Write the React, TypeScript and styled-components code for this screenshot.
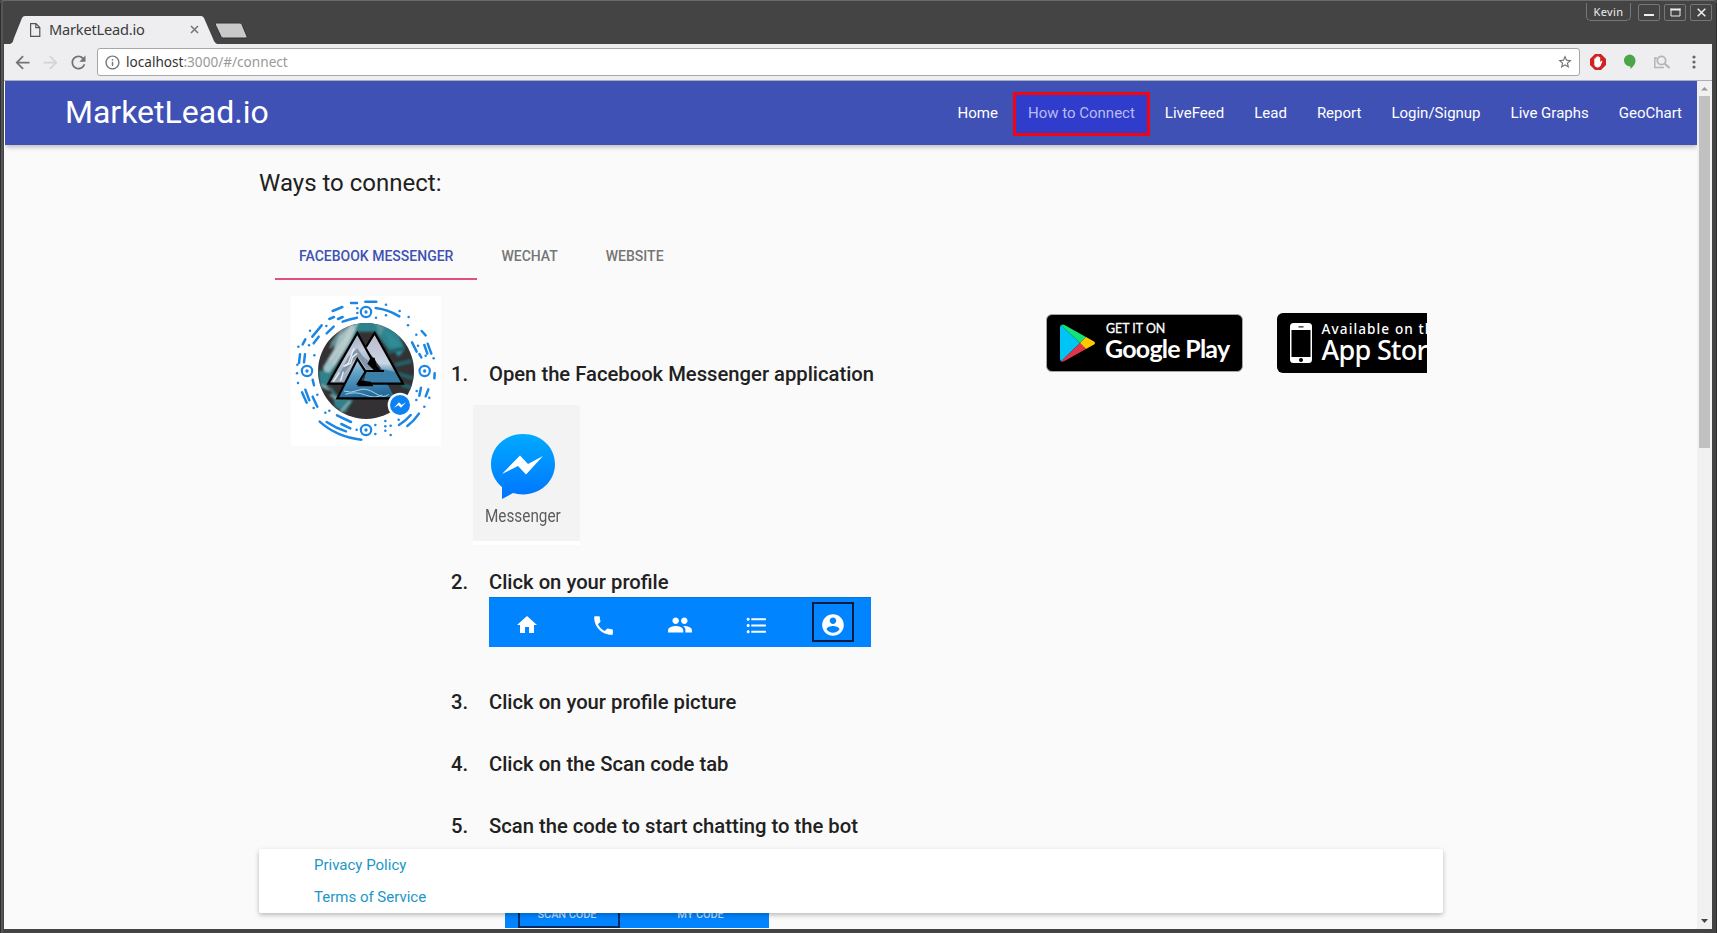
import React from "react";
import styled, { createGlobalStyle } from "styled-components";

const Global = createGlobalStyle`
  * { box-sizing: border-box; }
  body { margin: 0; background: #444; font-family: Roboto, sans-serif; overflow: hidden; }
`;

/* ---------- browser window ---------- */
const Window = styled.div`
  width: 1717px;
  height: 933px;
  display: flex;
  flex-direction: column;
  padding: 0 5px 4px 4px;
  background: #444;
  border-radius: 4px 4px 0 0;
  box-shadow: inset 0 2px 0 -1px #6a6a6a, inset 1px 0 0 #2e2e2e, inset 3px 0 0 #555, inset -1px 0 0 #2e2e2e;
`;
const TitleBar = styled.div`
  height: 44px;
  flex: none;
  display: flex;
  justify-content: space-between;
`;
const TabStrip = styled.div`
  position: relative;
  width: 260px;
  height: 44px;
  padding: 18px 0 0 25px;
  display: flex;
  align-items: flex-start;
`;
const TabShape = styled.svg`
  position: absolute;
  left: 0;
  top: 0;
`;
const TabContent = styled.div`
  position: relative;
  display: flex;
  align-items: center;
  height: 23px;
  width: 170px;
  font: 14.6px/22px "Noto Sans", sans-serif;
  letter-spacing: -0.2px;
  color: #3b3b3b;
  svg { flex: none; }
  span { flex: 1; margin: -1px 0 0 8px; }
`;
const WindowButtons = styled.div`
  display: flex;
  align-items: flex-start;
  padding-top: 3px;
`;
const UserButton = styled.div`
  width: 45px;
  height: 18px;
  margin-right: 3px;
  border: 1px solid #777;
  border-top: none;
  border-radius: 0 0 5px 5px;
  text-align: center;
  font: 11px/18px "Noto Sans", sans-serif;
  letter-spacing: 0.35px;
  color: #eee;
`;
const WinButton = styled.div`
  width: 22px;
  height: 17px;
  margin: 1px 0 0 4px;
  border: 1px solid #777;
  border-radius: 2px;
  display: flex;
  align-items: center;
  justify-content: center;
`;
const Toolbar = styled.div`
  height: 37px;
  flex: none;
  background: #eeeef0;
  border-bottom: 1px solid #a9aebf;
  display: flex;
  align-items: center;
  padding: 0 9px 0 8px;
`;
const NavIcons = styled.div`
  display: flex;
  width: 85px;
  gap: 7px;
`;
const Address = styled.div`
  flex: none;
  width: 1483px;
  height: 28px;
  border: 1px solid #a6a6a6;
  border-radius: 3px;
  background: #fff;
  display: flex;
  align-items: center;
  padding: 0 6px;
  font: 13.6px/26px "Noto Sans", sans-serif;
  color: #999;
  b { font-weight: 400; color: #333; }
  span { flex: 1; margin-left: 5px; }
`;
const Extensions = styled.div`
  flex: 1;
  display: flex;
  align-items: center;
  padding-left: 10px;
`;
const ExtIcon = styled.svg<{ $gap?: number }>`
  flex: none;
  margin-right: ${(p) => p.$gap ?? 16}px;
`;

/* ---------- page ---------- */
const Viewport = styled.div`
  flex: 1;
  min-height: 0;
  display: flex;
  padding-left: 1px;
  background: #fafafa;
`;
const Page = styled.div`
  position: relative;
  width: 1692px;
  overflow: hidden;
  background: #fafafa;
  color: #212121;
`;
const ScrollTrack = styled.div`
  flex: 1;
  background: #f1f1f1;
  display: flex;
  flex-direction: column;
  align-items: center;
  justify-content: space-between;
`;
const ScrollTop = styled.div`
  display: flex;
  flex-direction: column;
  align-items: center;
`;
const Arrow = styled.svg`
  display: block;
`;
const Thumb = styled.div`
  width: 11px;
  height: 352px;
  background: #c1c1c1;
`;
const Nav = styled.nav`
  position: relative;
  height: 64px;
  background: #3f51b5;
  box-shadow: 0 2px 5px rgba(0, 0, 0, 0.26);
  display: flex;
  justify-content: space-between;
  color: #fff;
`;
const Brand = styled.div`
  margin-left: 60px;
  font-size: 32px;
  line-height: 63px;
`;
const Links = styled.div`
  display: flex;
  align-items: center;
`;
const Link = styled.a<{ $active?: boolean }>`
  display: block;
  padding: 0 ${(p) => (p.$active ? 12 : 15)}px;
  height: ${(p) => (p.$active ? 44 : 40)}px;
  line-height: ${(p) => (p.$active ? 37 : 40)}px;
  margin-top: ${(p) => (p.$active ? 2 : 0)}px;
  font-size: 15px;
  color: ${(p) => (p.$active ? "#b9bdf0" : "#fff")};
  background: ${(p) => (p.$active ? "#303ccb" : "transparent")};
  border: ${(p) => (p.$active ? "3px solid #f20510" : "none")};
`;
const Container = styled.main`
  width: 1184px;
  margin: 0 auto;
`;
const Heading = styled.h1`
  margin: 0;
  padding-top: 23px;
  font-size: 24px;
  line-height: 30px;
  font-weight: 400;
`;
const Tabs = styled.div`
  display: flex;
  height: 48px;
  margin: 34px 0 0 16px;
`;
const Tab = styled.div<{ $active?: boolean }>`
  padding: 0 24px;
  line-height: 48px;
  height: 48px;
  font-size: 14px;
  font-weight: 500;
  color: ${(p) => (p.$active ? "#3f51b5" : "#757575")};
  box-shadow: inset 0 -2px 0 ${(p) => (p.$active ? "#e0507f" : "transparent")};
`;
const Columns = styled.div`
  display: flex;
  padding: 16px 0 0 32px;
`;
const CodeImage = styled.svg`
  flex: none;
  display: block;
  background: #fff;
`;
const Steps = styled.ol`
  list-style: none;
  margin: 66px 0 0 10px;
  padding: 0;
  width: 594px;
`;
const Step = styled.li<{ $h: number }>`
  height: ${(p) => p.$h}px;
  display: flex;
  font-size: 20.23px;
  line-height: 24px;
  font-weight: 500;
`;
const Num = styled.span`
  width: 38px;
  flex: none;
`;
const AppTile = styled.div`
  width: 107px;
  height: 140px;
  margin: 19px 0 0 -16px;
  border-bottom: 4px solid #fff;
  background: #f3f3f3;
  padding-top: 28px;
  font: 400 17px/20px Roboto, sans-serif;
  color: #5c5c5c;
  svg { display: block; margin: 0 0 7px 16px; }
`;
const TileLabel = styled.div`
  margin-left: 12px;
  transform: scale(0.9, 1.08);
  transform-origin: 0 60%;
  white-space: nowrap;
`;
const ProfileBar = styled.div`
  width: 382px;
  height: 50px;
  margin-top: 3px;
  background: #0084ff;
  border-top: 1px solid #0877d8;
  display: grid;
  grid-template-columns: repeat(5, 76.4px);
`;
const BarCell = styled.div`
  display: flex;
  align-items: center;
  justify-content: center;
  padding-top: 5px;
`;
const Selected = styled.div`
  width: 42px;
  height: 40px;
  margin-top: -6px;
  padding-top: 6px;
  border: 2px solid #0a1a3c;
  display: flex;
  align-items: center;
  justify-content: center;
`;
const ScanBar = styled.div`
  width: 264px;
  height: 48px;
  margin: 42px 0 0 16px;
  background: #0084ff;
  display: flex;
  padding: 0 0 0 13px;
  font: 500 11px/46px Roboto, sans-serif;
  color: #b9dcff;
`;
const ScanTab = styled.div<{ $on?: boolean }>`
  width: ${(p) => (p.$on ? 102 : 148)}px;
  padding: 0 ${(p) => (p.$on ? 4 : 0)}px 0 ${(p) => (p.$on ? 0 : 13)}px;
  border: ${(p) => (p.$on ? "2px solid #0a2a5c" : "2px solid transparent")};
  line-height: 66px;
  letter-spacing: -0.1px;
  text-align: center;
`;
const Badges = styled.div`
  display: flex;
  margin-top: 18px;
  gap: 34px;
`;
const PlayBadge = styled.div`
  width: 197px;
  height: 58px;
  margin-left: 1px;
  background: #000;
  border: 1px solid #a6a6a6;
  border-radius: 6px;
  display: flex;
  padding: 9px 0 0 13px;
  color: #fff;
  svg { flex: none; }
`;
const BadgeText = styled.div<{ $ml: number }>`
  margin-left: ${(p) => p.$ml}px;
  white-space: nowrap;
`;
const PlaySmall = styled.div`
  margin: -1px 0 0 1px;
  font: 400 12.4px/12px Lato, sans-serif;
  -webkit-text-stroke: 0.3px #fff;
`;
const PlayBig = styled.div`
  font: 700 25px/26px Lato, sans-serif;
  letter-spacing: -0.75px;
`;
const StoreBadge = styled.div`
  width: 150px;
  height: 60px;
  margin-top: -1px;
  background: #000;
  border-radius: 6px 0 0 6px;
  display: flex;
  padding: 10px 0 0 13px;
  overflow: hidden;
  color: #fff;
  svg { flex: none; }
`;
const StoreSmall = styled.div`
  font: 500 13.6px/12px "Noto Sans", sans-serif;
  letter-spacing: 1.1px;
`;
const StoreBig = styled.div`
  font: 500 27px/29px "Noto Sans", sans-serif;
  letter-spacing: -0.7px;
`;
const Footer = styled.footer`
  position: absolute;
  left: 254px;
  bottom: 16px;
  width: 1184px;
  height: 64px;
  padding-left: 55px;
  background: #fff;
  border-radius: 2px;
  box-shadow: 0 2px 5px rgba(0, 0, 0, 0.26);
  font-size: 15px;
  line-height: 32px;
`;
const FooterLink = styled.a`
  display: block;
  color: #1a96c8;
`;

const MATERIAL = {
  home: "M10 20v-6h4v6h5v-8h3L12 3 2 12h3v8z",
  phone:
    "M6.62 10.79c1.44 2.83 3.76 5.14 6.59 6.59l2.2-2.2c.27-.27.67-.36 1.02-.24 1.12.37 2.33.57 3.57.57.55 0 1 .45 1 1V20c0 .55-.45 1-1 1-9.39 0-17-7.61-17-17 0-.55.45-1 1-1h3.5c.55 0 1 .45 1 1 0 1.25.2 2.45.57 3.57.11.35.03.74-.25 1.02l-2.2 2.2z",
  people:
    "M16 11c1.66 0 2.99-1.34 2.99-3S17.66 5 16 5s-3 1.34-3 3 1.34 3 3 3zm-8 0c1.66 0 2.99-1.34 2.99-3S9.66 5 8 5 5 6.34 5 8s1.34 3 3 3zm0 2c-2.33 0-7 1.17-7 3.5V19h14v-2.5c0-2.33-4.67-3.5-7-3.5zm8 0c-.29 0-.62.02-.97.05 1.16.84 1.97 1.97 1.97 3.45V19h6v-2.5c0-2.33-4.67-3.5-7-3.5z",
  list:
    "M4 10.5c-.83 0-1.5.67-1.5 1.5s.67 1.5 1.5 1.5 1.5-.67 1.5-1.5-.67-1.5-1.5-1.5zm0-6c-.83 0-1.5.67-1.5 1.5S3.170 7.500 4 7.500 5.500 6.830 5.500 6 4.830 4.500 4 4.500zm0 12c-.83 0-1.500.68-1.500 1.500s.68 1.500 1.500 1.500 1.500-.68 1.500-1.500-.67-1.500-1.500-1.500zM7 19h14v-2H7v2zm0-6h14v-2H7v2zm0-8v2h14V5H7z",
  account:
    "M12 2C6.480 2 2 6.480 2 12s4.480 10 10 10 10-4.480 10-10S17.520 2 12 2zm0 3c1.660 0 3 1.340 3 3s-1.340 3-3 3-3-1.340-3-3 1.340-3 3-3zm0 14.200c-2.500 0-4.710-1.280-6-3.220.03-1.990 4-3.080 6-3.080 1.990 0 5.970 1.090 6 3.080-1.290 1.940-3.500 3.220-6 3.220z",
  back: "M20 11H7.830l5.590-5.590L12 4l-8 8 8 8 1.410-1.410L7.830 13H20v-2z",
  forward: "M12 4l-1.410 1.410L16.170 11H4v2h12.170l-5.580 5.590L12 20l8-8z",
  reload:
    "M17.650 6.350C16.200 4.900 14.210 4 12 4c-4.420 0-7.990 3.580-7.990 8s3.570 8 7.990 8c3.730 0 6.840-2.550 7.730-6h-2.080c-.82 2.330-3.040 4-5.650 4-3.310 0-6-2.690-6-6s2.690-6 6-6c1.660 0 3.140.69 4.220 1.780L13 11h7V4l-2.350 2.350z",
  info: "M11 17h2v-6h-2v6zm1-15C6.480 2 2 6.480 2 12s4.480 10 10 10 10-4.480 10-10S17.520 2 12 2zm0 18c-4.410 0-8-3.590-8-8s3.590-8 8-8 8 3.590 8 8-3.590 8-8 8zM11 9h2V7h-2v2z",
  star: "M22 9.240l-7.190-.62L12 2 9.190 8.630 2 9.240l5.460 4.730L5.820 21 12 17.270 18.180 21l-1.630-7.030L22 9.240zM12 15.400l-3.760 2.270 1-4.280-3.320-2.880 4.380-.38L12 6.100l1.710 4.040 4.380.38-3.320 2.880 1 4.280L12 15.400z",
};

const Icon = ({ d, size, color }: { d: string; size: number; color: string }) => (
  <svg width={size} height={size} viewBox="0 0 24 24" fill={color}>
    <path d={d} />
  </svg>
);

const DASHES = `M158 78L187 66M213 54h18M256 50h33M287 69Q325 74 358 94M188 110Q208 102 231 98M148 102l14-6M174 102l14-6
M97 155l28-34M101 175l15-20M140 145l21-20M68 178l8-15M396 172l14 28M425 138l12 13M433 180l9 26M443 176l11 30M418 207l6 10
M60 208l-3 26M75 208l-3 24M98 284l4 17M76 314l12 32M66 322l14 31M98 335l14 30M464 265l-1 15M423 308l-5 24M445 313l-8 21
M119 410Q170 456 244 464M140 411Q168 430 198 439M171 391L213 411M184 417L211 430M357 420Q378 407 392 390M382 423Q402 408 417 386`;
const DOTS = [
  [318, 59], [359, 78], [386, 96], [318, 91], [288, 98], [232, 70], [232, 84], [90, 137], [139, 123], [384, 121],
  [409, 149], [414, 182], [437, 212], [461, 220], [55, 185], [87, 181], [103, 211], [52, 239], [51, 265], [54, 294],
  [112, 329], [409, 345], [448, 338], [433, 365], [101, 369],
  [148, 377], [136, 383], [230, 434], [286, 420], [286, 447], [316, 408], [316, 424],
  [332, 422], [316, 437], [332, 450], [356, 404], [410, 318],
];
const EYES = [[258, 81], [81, 258], [434, 258], [258, 435]];
const BOLT = "M-18 8L-3 -8L5 0L18 -8L3 8L-5 1Z";

const MessengerCode = () => (
  <CodeImage width="150" height="150" viewBox="33 33 450 450">
    <defs>
      <clipPath id="disc"><circle cx="258" cy="258" r="144" /></clipPath>
      <linearGradient id="peak" x1="0" y1="0" x2="0.3" y2="1">
        <stop offset="0" stopColor="#8f9bb8" />
        <stop offset="0.5" stopColor="#c6cede" />
        <stop offset="1" stopColor="#8ea2b6" />
      </linearGradient>
      <linearGradient id="sea" x1="0" y1="0" x2="0.2" y2="1">
        <stop offset="0" stopColor="#b9cde0" />
        <stop offset="0.45" stopColor="#5a9cc4" />
        <stop offset="1" stopColor="#246a9a" />
      </linearGradient>
      <linearGradient id="sky" x1="0" y1="0" x2="0" y2="1">
        <stop offset="0" stopColor="#bcb8cc" />
        <stop offset="0.6" stopColor="#c9d6e4" />
        <stop offset="0.8" stopColor="#4b86aa" />
        <stop offset="1" stopColor="#2d6f98" />
      </linearGradient>
      <filter id="paint" x="-10%" y="-10%" width="120%" height="120%"><feGaussianBlur stdDeviation="2.5" /></filter>
    </defs>
    <path d={DASHES} fill="none" stroke="#1c86e4" strokeWidth="7.5" strokeLinecap="round" />
    {DOTS.map(([x, y], i) => <circle key={i} cx={x} cy={y} r="3.8" fill="#1c86e4" />)}
    {EYES.map(([x, y], i) => (
      <g key={i}>
        <circle cx={x} cy={y} r="15.500" fill="#fff" stroke="#1c86e4" strokeWidth="6.5" />
        <circle cx={x} cy={y} r="5" fill="#1c86e4" />
      </g>
    ))}
    <g clipPath="url(#disc)">
      <rect x="110" y="110" width="300" height="300" fill="#333133" />
      <g filter="url(#paint)">
        <path d="M190 118L270 105L345 125L375 190L330 200L285 140L235 140L180 225L140 295L128 250L170 190L150 175Z" fill="#2e828c" />
        <path d="M235 112L210 175L165 240L135 280L130 245L160 195L180 145Z" fill="#9cc0c4" />
        <path d="M215 118L195 165L150 225M222 130L160 240" fill="none" stroke="#c3cccd" strokeWidth="7" />
        <path d="M150 190l35 -55M165 160l40 -35" stroke="#8a8d90" strokeWidth="6" />
        <path d="M310 130L350 165L370 200L355 215L330 180Z" fill="#2d8c97" />
        <path d="M325 200l50 -10 M345 240l50 -12M350 265l50 15M365 300l32 8" stroke="#24606a" strokeWidth="12" />
        <path d="M115 255l40 10 -15 50 -20 -10ZM150 300l20 30 50 15 -25 40 -30 -20Z" fill="#33808a" />
        <path d="M125 300l25 15M150 330l25 12M210 348l-30 35" stroke="#9ab3b4" strokeWidth="5" />
        <path d="M285 110l30 15 -15 30ZM275 118l15 40" fill="#57949a" />
      </g>
      <path d="M284 144L369 296H250L258 262H312L257 188Z" fill="url(#sky)" />
      <path d="M298 250L345 262L366 294L330 294L250 290L262 258Z" fill="#3a7fa8" />
      <path d="M232 144L293 254L262 262L232 222L196 296H145Z" fill="url(#peak)" />
      <path d="M232 190L250 215L262 225L285 250L262 254L234 216L222 226L196 260L166 292L205 215Z" fill="#8496a8" />
      <path d="M222 190L205 235L190 245L212 235L218 215L232 205M178 262L160 290M190 260L182 288" fill="none" stroke="#e9eef5" strokeWidth="4" />
      <path d="M232 222L258 262L240 296H322L345 340H172Z" fill="url(#sea)" />
      <path d="M192 318q20 8 42 -2t50 8 42 4M196 328q30 -10 60 2t50 0" fill="none" stroke="#a9d3e6" strokeWidth="3" />
      <g fill="none" stroke="#000" strokeWidth="6.5">
        <path d="M193 296H145L232 144L293 256" />
        <path d="M258 186L284 144L369 296H234L258 258H312" />
        <path d="M258 262L232 222L172 340H345" />
      </g>
      <path d="M272 218L284 218L290 244L304 256L284 258L262 236ZM232 304L240 286L272 290L280 304Z" fill="#000" />
    </g>
    <circle cx="360" cy="360" r="37" fill="#fff" />
    <circle cx="360" cy="360" r="30" fill="#0c83f5" />
    <path d={BOLT} transform="translate(360 360)" fill="#fff" />
  </CodeImage>
);

const links = ["Home", "How to Connect", "LiveFeed", "Lead", "Report", "Login/Signup", "Live Graphs", "GeoChart"];

export default function App() {
  return (
    <>
      <Global />
      <Window>
        <TitleBar>
          <TabStrip>
            <TabShape width="260" height="44">
              <path d="M6 44C9 43 9 41 10 38L18 18Q19 16 21 16H197Q199 16 200 18L210 41Q211 43 213 44Z" fill="#eeeef0" />
              <path d="M212.500 23H236Q237.500 23 238 24.500L243 36.500Q243.500 38 242 38H219.500Q218 38 217 36.500L211.500 25Q211 23 212.500 23Z" fill="#c9c9c9" stroke="#333" strokeWidth="1" />
            </TabShape>
            <TabContent>
              <svg width="12" height="16" viewBox="0 0 12 16" fill="none" stroke="#555" strokeWidth="1.2">
                <path d="M1.600 1.600H7L10.800 5.500V14.400H1.600ZM6.800 1.600V5.700H10.800" />
              </svg>
              <span>MarketLead.io</span>
              <svg width="9" height="9" viewBox="0 0 9 9" stroke="#777" strokeWidth="1.600"><path d="M1 1l7 7M8 1l-7 7" /></svg>
            </TabContent>
          </TabStrip>
          <WindowButtons>
            <UserButton>Kevin</UserButton>
            <WinButton><svg width="12" height="9"><path d="M1 7h10" stroke="#eee" strokeWidth="2" /></svg></WinButton>
            <WinButton><svg width="11" height="9" fill="none" stroke="#eee"><path d="M1 .5V8H10V.5" /><path d="M.5 1.500h10" strokeWidth="2" /></svg></WinButton>
            <WinButton><svg width="9" height="9"><path d="M.7 .7l7.600 7.600M8.300 .7l-7.600 7.600" stroke="#eee" strokeWidth="1.500" /></svg></WinButton>
          </WindowButtons>
        </TitleBar>
        <Toolbar>
          <NavIcons>
            <Icon d={MATERIAL.back} size={21} color="#737373" />
            <Icon d={MATERIAL.forward} size={21} color="#d4d4d6" />
            <Icon d={MATERIAL.reload} size={21} color="#737373" />
          </NavIcons>
          <Address>
            <Icon d={MATERIAL.info} size={17} color="#777" />
            <span><b>localhost</b>:3000/#/connect</span>
            <Icon d={MATERIAL.star} size={16} color="#6c6c6c" />
          </Address>
          <Extensions>
            <ExtIcon $gap={17} width="16" height="16" viewBox="0 0 16 16">
              <path d="M5 0h6l5 5v6l-5 5H5l-5-5V5z" fill="#d22323" />
              <path d="M4.300 9V4.700q.7-1 1.400 0V3.200q.8-.9 1.500 0v-.6q.8-.9 1.600 0V3.500q.7-.8 1.400 0V8l1.200-1.300q1-.3.9.7L10.500 12q-1 1.500-3 1.400Q5 13.400 4.300 11z" fill="#fff" />
            </ExtIcon>
            <ExtIcon $gap={18} width="13" height="16" viewBox="0 0 12 16">
              <path d="M6 .5a6 6 0 0 1 6 6c0 4-3 6.500-5 8.500v-2.500A6 6 0 1 1 6 .5z" fill="#4ca548" />
            </ExtIcon>
            <ExtIcon $gap={20} width="17" height="15" viewBox="0 0 17 15" fill="none" stroke="#b5b5b5">
              <path d="M3 3H.8v9.500H10" strokeWidth="1.500" /><circle cx="7.500" cy="5.500" r="4.200" strokeWidth="1.800" /><path d="M10.500 8.500l5 4.500" strokeWidth="2.200" />
            </ExtIcon>
            <ExtIcon $gap={0} width="6" height="14" fill="#666"><circle cx="3" cy="2" r="1.600" /><circle cx="3" cy="7" r="1.600" /><circle cx="3" cy="12" r="1.600" /></ExtIcon>
          </Extensions>
        </Toolbar>
        <Viewport>
          <Page>
            <Nav>
              <Brand>MarketLead.io</Brand>
              <Links>
                {links.map((l) => <Link key={l} $active={l === "How to Connect"}>{l}</Link>)}
              </Links>
            </Nav>
            <Container>
              <Heading>Ways to connect:</Heading>
              <Tabs>
                <Tab $active>FACEBOOK MESSENGER</Tab>
                <Tab>WECHAT</Tab>
                <Tab>WEBSITE</Tab>
              </Tabs>
              <Columns>
                <MessengerCode />
                <Steps>
                  <Step $h={208}>
                    <Num>1.</Num>
                    <div>
                      Open the Facebook Messenger application
                      <AppTile>
                        <svg width="66" height="66" viewBox="0 0 66 66">
                          <defs><linearGradient id="msg" x1="0" y1="0" x2="0" y2="1"><stop offset="0" stopColor="#00aaff" /><stop offset="1" stopColor="#0074ff" /></linearGradient></defs>
                          <path d="M34 1C16 1 2 14 2 31c0 9.500 4 17 11 23v12l11-6c3 .9 6 1.400 10 1.400 18 0 32-13.500 32-30.400S52 1 34 1z" fill="url(#msg)" />
                          <path d="M13 41L31 22.500L39 31L54 23L37 41.500L29 33Z" fill="#fff" />
                        </svg>
                        <TileLabel>Messenger</TileLabel>
                      </AppTile>
                    </div>
                  </Step>
                  <Step $h={120}>
                    <Num>2.</Num>
                    <div>
                      Click on your profile
                      <ProfileBar>
                        <BarCell><Icon d={MATERIAL.home} size={24} color="#fff" /></BarCell>
                        <BarCell><Icon d={MATERIAL.phone} size={25} color="#fff" /></BarCell>
                        <BarCell><Icon d={MATERIAL.people} size={26} color="#fff" /></BarCell>
                        <BarCell><Icon d={MATERIAL.list} size={25} color="#fff" /></BarCell>
                        <BarCell><Selected><Icon d={MATERIAL.account} size={26} color="#fff" /></Selected></BarCell>
                      </ProfileBar>
                    </div>
                  </Step>
                  <Step $h={62}><Num>3.</Num>Click on your profile picture</Step>
                  <Step $h={62}><Num>4.</Num>Click on the Scan code tab</Step>
                  <Step $h={140}>
                    <Num>5.</Num>
                    <div>
                      Scan the code to start chatting to the bot
                      <ScanBar><ScanTab $on>SCAN CODE</ScanTab><ScanTab>MY CODE</ScanTab></ScanBar>
                    </div>
                  </Step>
                </Steps>
                <Badges>
                  <PlayBadge>
                    <svg width="36" height="38" viewBox="0 0 36 38">
                      <path d="M1 1Q0 2 0 4V34Q0 36 1 37.500L20 19Z" fill="#00c4f4" />
                      <path d="M1 1Q2.500 0 4.500 1L26 13L20 19Z" fill="#11e57a" />
                      <path d="M1 37.500Q2.500 38 4.500 37L26 25L20 19Z" fill="#e2354b" />
                      <path d="M26 13L34 17.500Q36 19 34 20.500L26 25L20 19Z" fill="#ffc900" />
                    </svg>
                    <BadgeText $ml={9}><PlaySmall>GET IT ON</PlaySmall><PlayBig>Google Play</PlayBig></BadgeText>
                  </PlayBadge>
                  <StoreBadge>
                    <svg width="22" height="40" viewBox="0 0 22 40">
                      <rect width="22" height="40" rx="3.500" fill="#fff" /><rect x="1.500" y="7" width="19" height="27" fill="#000" />
                      <path d="M8.500 3.800h5" stroke="#222" strokeWidth="1.300" /><circle cx="11" cy="37" r="2" fill="#000" />
                    </svg>
                    <BadgeText $ml={9.5}><StoreSmall>Available on the</StoreSmall><StoreBig>App Store</StoreBig></BadgeText>
                  </StoreBadge>
                </Badges>
              </Columns>
            </Container>
            <Footer><FooterLink>Privacy Policy</FooterLink><FooterLink>Terms of Service</FooterLink></Footer>
          </Page>
          <ScrollTrack>
            <ScrollTop>
              <Arrow width="15" height="15"><path d="M4 9.500h7L7.500 6z" fill="#999" /></Arrow>
              <Thumb />
            </ScrollTop>
            <Arrow width="15" height="15"><path d="M4 5h7L7.500 9z" fill="#444" /></Arrow>
          </ScrollTrack>
        </Viewport>
      </Window>
    </>
  );
}
